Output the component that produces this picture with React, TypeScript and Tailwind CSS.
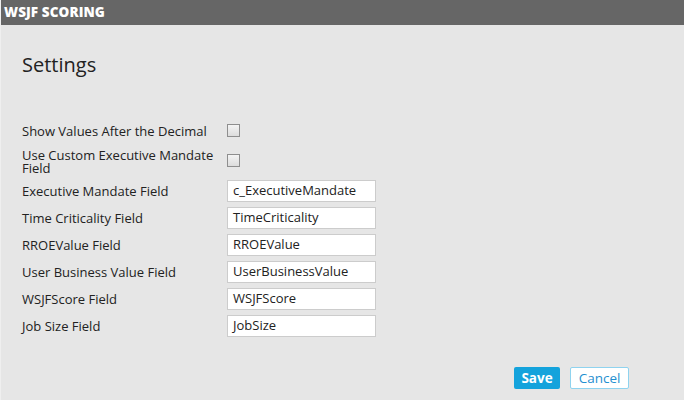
import React from "react";

const Checkbox = () => (
  <div className="w-[13px] h-[13px] border border-[#8e8e8e] bg-gradient-to-b from-[#f4f4f4] to-[#dcdcdc]" />
);

const Field = ({ value }: { value: string }) => (
  <div className="w-[149px] h-[22px] bg-white border border-[#cccccc] flex items-center pl-[5px] text-[13px] text-[#222]">
    {value}
  </div>
);

export default function App() {
  const fields: [string, string][] = [
    ["Executive Mandate Field", "c_ExecutiveMandate"],
    ["Time Criticality Field", "TimeCriticality"],
    ["RROEValue Field", "RROEValue"],
    ["User Business Value Field", "UserBusinessValue"],
    ["WSJFScore Field", "WSJFScore"],
    ["Job Size Field", "JobSize"],
  ];
  return (
    <div
      className="w-[684px] h-[400px] bg-[#e6e6e6] flex flex-col border-l border-[#efefef]"
      style={{ fontFamily: '"Open Sans", "Noto Sans", sans-serif' }}
    >
      <div className="h-[25px] bg-[#666666] flex items-center pl-[3px] text-white text-[13.5px] font-extrabold tracking-[0.1px]">
        WSJF SCORING
      </div>
      <div className="pl-[21px] mt-[26px] text-[20px] leading-[28px] text-[#222]">Settings</div>
      <div className="pl-[21px] mt-[41px] flex flex-col gap-[6px] text-[13px] text-[#222]">
        <div className="flex items-center h-[21px]">
          <div className="w-[205px] pt-[2px]">Show Values After the Decimal</div>
          <Checkbox />
        </div>
        <div className="flex items-center h-[27px]">
          <div className="w-[205px] pr-[8px] leading-[13px] pt-[2px]">Use Custom Executive Mandate Field</div>
          <Checkbox />
        </div>
        {fields.map(([l, v]) => (
          <div key={l} className="flex items-center h-[21px]">
            <div className="w-[205px] pt-[3px]">{l}</div>
            <Field value={v} />
          </div>
        ))}
      </div>
      <div className="mt-auto mb-[11px] flex justify-end gap-[10px] pr-[55px]">
        <button className="h-[22px] w-[46px] rounded-[2px] bg-[#14a3dc] text-white text-[13.5px] font-bold">
          Save
        </button>
        <button className="h-[22px] w-[59px] rounded-[2px] bg-white border border-[#8fd3ef] text-[#1f8fd0] text-[13.5px]">
          Cancel
        </button>
      </div>
    </div>
  );
}
